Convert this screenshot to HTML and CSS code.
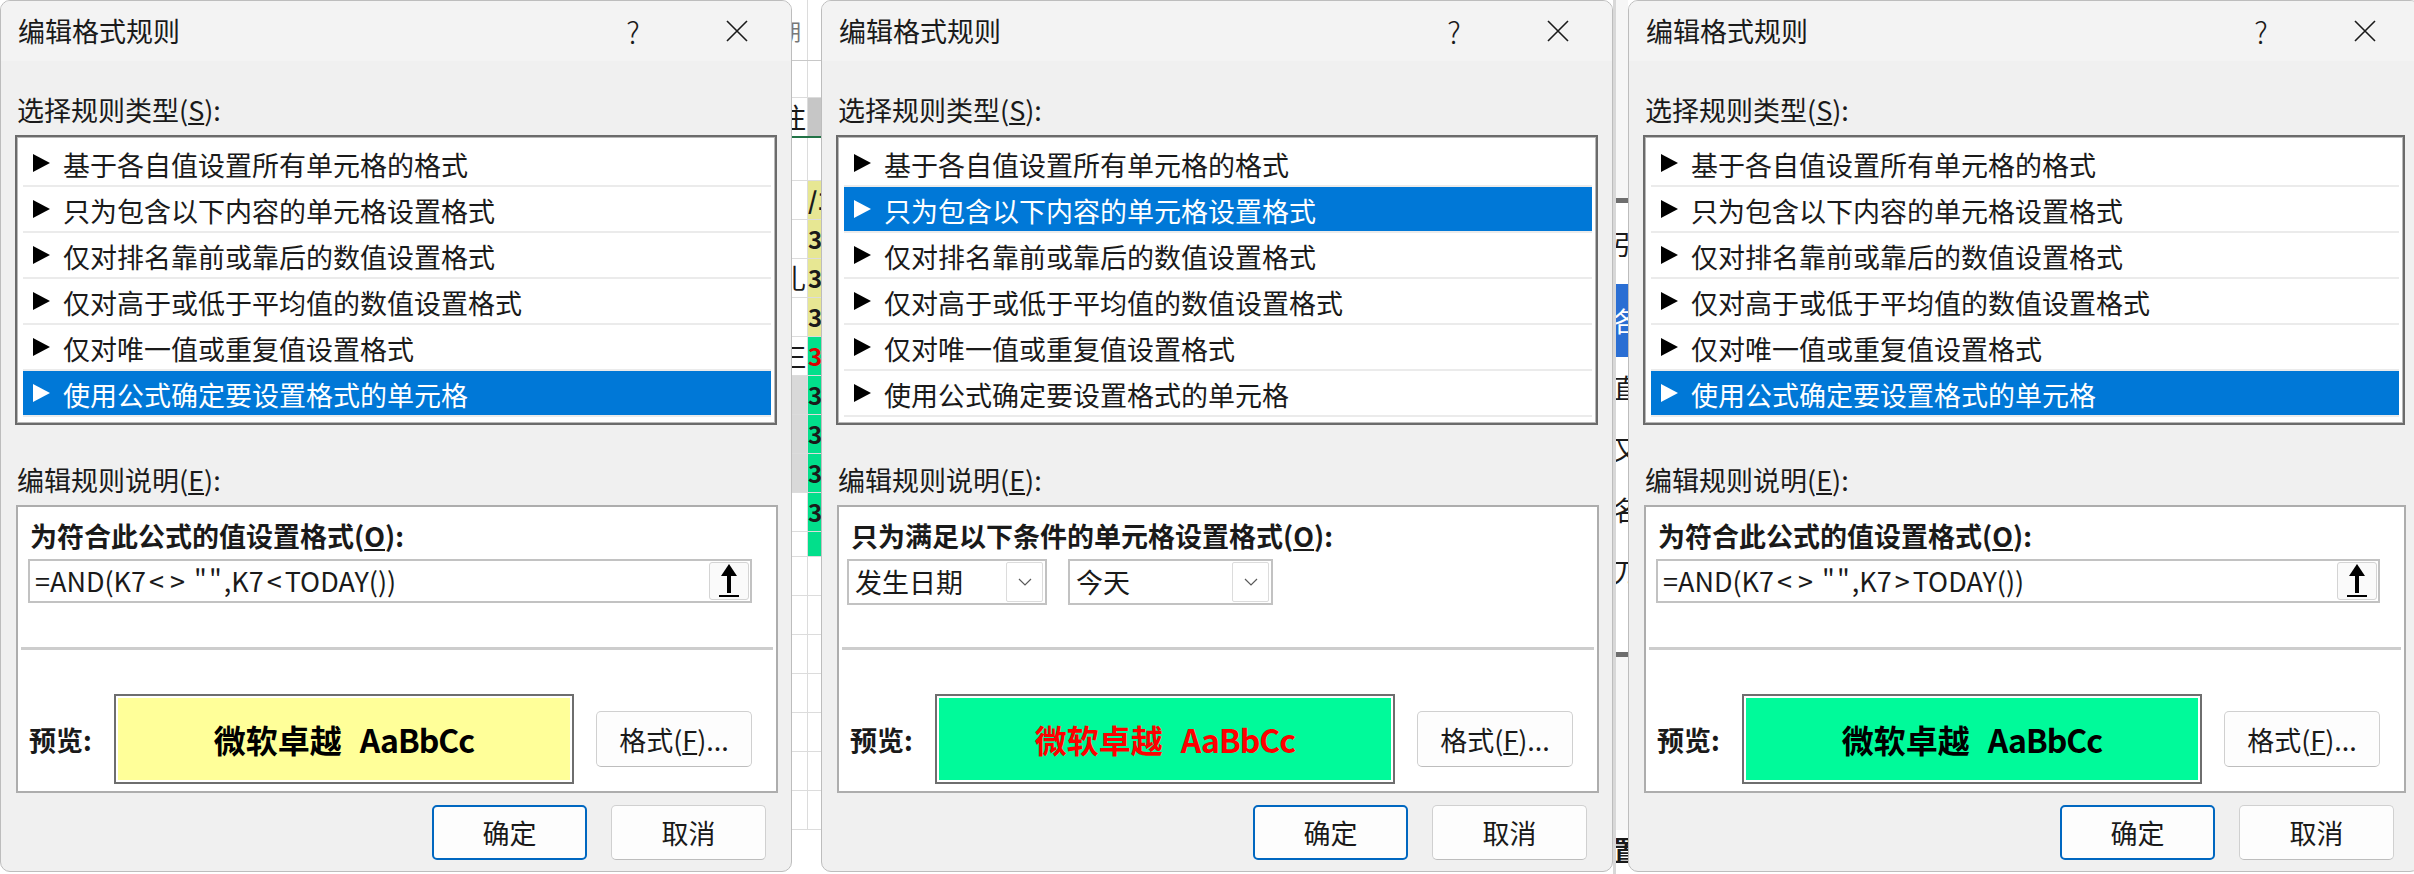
FILE: index.html
```html
<!DOCTYPE html>
<html lang="zh-CN">

<head>
  <meta charset="UTF-8" />
  <title>编辑格式规则</title>
  <link rel="stylesheet" href="styles.css">
</head>

<body>
  <div class="screen">
    <!-- 第一个对话框：公式 < TODAY() -->
    <div class="dialog">
      <div class="titlebar">
        <span class="title">编辑格式规则</span>
        <span class="cap cap-help">?</span>
        <span class="cap"><svg width="24" height="24" viewBox="0 0 24 24"><path d="M2 2L22 22M22 2L2 22" stroke="#1a1a1a" stroke-width="1.6" fill="none"/></svg></span>
      </div>
      <div class="label">选择规则类型(<u>S</u>):</div>
      <ul class="rules">
        <li><i class="arrow"></i>基于各自值设置所有单元格的格式</li>
        <li><i class="arrow"></i>只为包含以下内容的单元格设置格式</li>
        <li><i class="arrow"></i>仅对排名靠前或靠后的数值设置格式</li>
        <li><i class="arrow"></i>仅对高于或低于平均值的数值设置格式</li>
        <li><i class="arrow"></i>仅对唯一值或重复值设置格式</li>
        <li class="on"><i class="arrow"></i>使用公式确定要设置格式的单元格</li>
      </ul>
      <div class="label label-edit">编辑规则说明(<u>E</u>):</div>
      <div class="desc">
        <div class="desc-title">为符合此公式的值设置格式(<u>O</u>):</div>
        <div class="formula">
          <span class="formula-text">=AND(K7<i class="op">&lt;</i><i class="op">&gt;</i><i class="q">""</i>,K7<i class="op">&lt;</i>TODAY())</span>
          <span class="ref-btn"><svg width="24" height="36" viewBox="0 0 24 36"><path d="M12 1L4 13H20Z" fill="#000"/><rect x="10" y="11" width="4" height="19" fill="#000"/><rect x="2" y="32" width="20" height="2" fill="#000"/></svg></span>
        </div>
        <div class="sep"></div>
        <div class="preview-row">
          <span class="preview-label">预览:</span>
          <div class="preview preview-yellow"><b>微软卓越</b><b class="latin">AaBbCc</b></div>
          <button class="btn btn-format">格式(<u>F</u>)...</button>
        </div>
      </div>
      <div class="actions">
        <button class="btn btn-ok">确定</button>
        <button class="btn">取消</button>
      </div>
    </div>

    <!-- 对话框后面露出的表格 -->
    <div class="sheet sheet-a">
      <div class="row r-top"><span class="cell"><i class="glyph gray">期</i></span><span class="cell"></span></div>
      <div class="row" style="height:37px"><span class="cell"></span><span class="cell"></span></div>
      <div class="row r-head"><span class="cell"><i class="glyph">注</i></span><span class="cell c-gray"></span></div>
      <div class="row" style="height:43px"><span class="cell"></span><span class="cell"></span></div>
      <div class="row"><span class="cell"></span><span class="cell c-yellow"><i class="num">/1</i></span></div>
      <div class="row"><span class="cell"></span><span class="cell c-yellow"><i class="num">3/</i></span></div>
      <div class="row"><span class="cell"><i class="glyph">扎</i></span><span class="cell c-yellow"><i class="num">3/</i></span></div>
      <div class="row"><span class="cell"></span><span class="cell c-yellow"><i class="num">3/</i></span></div>
      <div class="row"><span class="cell"><i class="glyph">仨</i></span><span class="cell c-green"><i class="num red">3/</i></span></div>
      <div class="row"><span class="cell c-gray2"></span><span class="cell c-green"><i class="num">3/</i></span></div>
      <div class="row"><span class="cell c-gray2"></span><span class="cell c-green"><i class="num">3/</i></span></div>
      <div class="row"><span class="cell c-gray2"></span><span class="cell c-green"><i class="num">3/</i></span></div>
      <div class="row"><span class="cell"></span><span class="cell c-green"><i class="num">3/</i></span></div>
      <div class="row" style="height:25px"><span class="cell"></span><span class="cell c-green"></span></div>
      <div class="row"><span class="cell"></span><span class="cell"></span></div>
      <div class="row"><span class="cell"></span><span class="cell"></span></div>
      <div class="row"><span class="cell"></span><span class="cell"></span></div>
      <div class="row"><span class="cell"></span><span class="cell"></span></div>
      <div class="row"><span class="cell"></span><span class="cell"></span></div>
      <div class="row"><span class="cell"></span><span class="cell"></span></div>
      <div class="row"><span class="cell"></span><span class="cell"></span></div>
    </div>

    <!-- 第二个对话框：发生日期 今天 -->
    <div class="dialog">
      <div class="titlebar">
        <span class="title">编辑格式规则</span>
        <span class="cap cap-help">?</span>
        <span class="cap"><svg width="24" height="24" viewBox="0 0 24 24"><path d="M2 2L22 22M22 2L2 22" stroke="#1a1a1a" stroke-width="1.6" fill="none"/></svg></span>
      </div>
      <div class="label">选择规则类型(<u>S</u>):</div>
      <ul class="rules">
        <li><i class="arrow"></i>基于各自值设置所有单元格的格式</li>
        <li class="on"><i class="arrow"></i>只为包含以下内容的单元格设置格式</li>
        <li><i class="arrow"></i>仅对排名靠前或靠后的数值设置格式</li>
        <li><i class="arrow"></i>仅对高于或低于平均值的数值设置格式</li>
        <li><i class="arrow"></i>仅对唯一值或重复值设置格式</li>
        <li><i class="arrow"></i>使用公式确定要设置格式的单元格</li>
      </ul>
      <div class="label label-edit">编辑规则说明(<u>E</u>):</div>
      <div class="desc">
        <div class="desc-title">只为满足以下条件的单元格设置格式(<u>O</u>):</div>
        <div class="combos">
          <div class="combo combo-date">
            <span class="combo-text">发生日期</span>
            <span class="combo-btn"><svg width="14" height="8" viewBox="0 0 14 8"><path d="M1 1L7 7L13 1" stroke="#5a5a5a" stroke-width="1.2" fill="none"/></svg></span>
          </div>
          <div class="combo combo-day">
            <span class="combo-text">今天</span>
            <span class="combo-btn"><svg width="14" height="8" viewBox="0 0 14 8"><path d="M1 1L7 7L13 1" stroke="#5a5a5a" stroke-width="1.2" fill="none"/></svg></span>
          </div>
        </div>
        <div class="sep sep-combo"></div>
        <div class="preview-row">
          <span class="preview-label">预览:</span>
          <div class="preview preview-green preview-red"><b>微软卓越</b><b class="latin">AaBbCc</b></div>
          <button class="btn btn-format">格式(<u>F</u>)...</button>
        </div>
      </div>
      <div class="actions">
        <button class="btn btn-ok">确定</button>
        <button class="btn">取消</button>
      </div>
    </div>

    <div class="sheet sheet-b">
      <div class="blk" style="height:198px;background:#f6f6f6"></div>
      <div class="blk bar"></div>
      <div class="blk" style="height:81px"><i class="glyph">引</i></div>
      <div class="blk blue" style="height:73px"><i class="glyph">各</i></div>
      <div class="blk" style="height:61px"><i class="glyph">直</i></div>
      <div class="blk" style="height:61px"><i class="glyph">又</i></div>
      <div class="blk" style="height:61px"><i class="glyph">名</i></div>
      <div class="blk" style="height:61px"><i class="glyph">刀</i></div>
      <div class="blk" style="height:51px"></div>
      <div class="blk bar"></div>
      <div class="blk" style="height:173px;background:#f6f6f6"></div>
      <div class="blk" style="height:40px"><i class="glyph bold">置</i></div>
    </div>

    <!-- 第三个对话框：公式 > TODAY() -->
    <div class="dialog">
      <div class="titlebar">
        <span class="title">编辑格式规则</span>
        <span class="cap cap-help">?</span>
        <span class="cap"><svg width="24" height="24" viewBox="0 0 24 24"><path d="M2 2L22 22M22 2L2 22" stroke="#1a1a1a" stroke-width="1.6" fill="none"/></svg></span>
      </div>
      <div class="label">选择规则类型(<u>S</u>):</div>
      <ul class="rules">
        <li><i class="arrow"></i>基于各自值设置所有单元格的格式</li>
        <li><i class="arrow"></i>只为包含以下内容的单元格设置格式</li>
        <li><i class="arrow"></i>仅对排名靠前或靠后的数值设置格式</li>
        <li><i class="arrow"></i>仅对高于或低于平均值的数值设置格式</li>
        <li><i class="arrow"></i>仅对唯一值或重复值设置格式</li>
        <li class="on"><i class="arrow"></i>使用公式确定要设置格式的单元格</li>
      </ul>
      <div class="label label-edit">编辑规则说明(<u>E</u>):</div>
      <div class="desc">
        <div class="desc-title">为符合此公式的值设置格式(<u>O</u>):</div>
        <div class="formula">
          <span class="formula-text">=AND(K7<i class="op">&lt;</i><i class="op">&gt;</i><i class="q">""</i>,K7<i class="op">&gt;</i>TODAY())</span>
          <span class="ref-btn"><svg width="24" height="36" viewBox="0 0 24 36"><path d="M12 1L4 13H20Z" fill="#000"/><rect x="10" y="11" width="4" height="19" fill="#000"/><rect x="2" y="32" width="20" height="2" fill="#000"/></svg></span>
        </div>
        <div class="sep"></div>
        <div class="preview-row">
          <span class="preview-label">预览:</span>
          <div class="preview preview-green"><b>微软卓越</b><b class="latin">AaBbCc</b></div>
          <button class="btn btn-format">格式(<u>F</u>)...</button>
        </div>
      </div>
      <div class="actions">
        <button class="btn btn-ok">确定</button>
        <button class="btn">取消</button>
      </div>
    </div>
  </div>
</body>

</html>
```

FILE: styles.css
```css
* {
  margin: 0;
  padding: 0;
  box-sizing: border-box;
}

body {
  width: 2414px;
  height: 874px;
  overflow: hidden;
  background: #fff;
  color: #1a1a1a;
  font-family: "Noto Sans CJK SC", "Noto Sans", sans-serif;
  font-size: 27px;
}

.screen {
  display: flex;
  height: 874px;
}

/* 对话框 */
.dialog {
  flex: none;
  width: 792px;
  height: 872px;
  background: #f0f0f0;
  border: 1px solid #bdbdbd;
  border-radius: 10px;
  display: flex;
  flex-direction: column;
  overflow: hidden;
}

.titlebar {
  height: 60px;
  flex: none;
  display: flex;
  align-items: center;
  padding: 0 2px 0 17px;
  background: #f3f3f3;
}

.title {
  flex: 1;
  line-height: 36px;
}

.cap {
  width: 104px;
  height: 60px;
  display: flex;
  align-items: center;
  justify-content: center;
}

.cap-help {
  font-size: 30px;
  font-weight: 300;
}

.label {
  margin: 31px 0 0 16px;
  line-height: 36px;
}

.label-edit {
  margin-top: 37px;
}

/* 规则类型列表 */
.rules {
  list-style: none;
  flex: none;
  margin: 7px 0 0 14px;
  width: 762px;
  height: 290px;
  background: #fff;
  border: 2px solid #6b6b6b;
  box-shadow: inset 0 0 0 1px #b8b8b8;
  padding: 4px 4px 6px 6px;
}

.rules li {
  height: 46px;
  border-bottom: 2px solid #ebebeb;
  display: flex;
  align-items: center;
  padding: 3px 0 0 10px;
  line-height: 36px;
}

.rules .arrow {
  width: 0;
  height: 0;
  border-left: 17px solid #000;
  border-top: 9.5px solid transparent;
  border-bottom: 9.5px solid transparent;
  margin: -3px 13px 0 0;
}

.rules li.on {
  background: #0078d7;
  color: #fff;
}

.rules li.on .arrow {
  border-left-color: #fff;
}

/* 规则说明 */
.desc {
  flex: none;
  margin: 7px 0 0 15px;
  width: 762px;
  height: 288px;
  background: #fff;
  border: 2px solid #adadad;
}

.desc-title {
  font-weight: 700;
  line-height: 36px;
  margin: 11px 0 0 12px;
}

.formula {
  margin: 5px 0 0 10px;
  width: 724px;
  height: 44px;
  border: 2px solid #c2c2c2;
  display: flex;
  align-items: center;
  padding: 0 1px 0 5px;
}

.formula-text {
  flex: 1;
  line-height: 36px;
}

.formula-text i {
  font-style: normal;
}

.formula-text .op {
  margin: 0 3px;
}

.formula-text .q {
  margin: 0 0 0 6px;
  letter-spacing: 2px;
}

.ref-btn {
  width: 40px;
  height: 38px;
  border: 1px solid #d4d4d4;
  border-radius: 3px;
  background: #fafafa;
  display: flex;
  align-items: center;
  justify-content: center;
}

.combos {
  display: flex;
  gap: 21px;
  margin: 5px 0 0 8px;
}

.combo {
  height: 46px;
  border: 2px solid #c2c2c2;
  display: flex;
  align-items: center;
  padding: 0 2px 0 6px;
}

.combo-date {
  width: 200px;
}

.combo-day {
  width: 205px;
}

.combo-text {
  flex: 1;
  line-height: 36px;
}

.combo-btn {
  width: 37px;
  height: 40px;
  border: 1px solid #dcdcdc;
  border-radius: 2px;
  display: flex;
  align-items: center;
  justify-content: center;
}

.sep {
  height: 3px;
  background: #cdcdcd;
  margin: 44px 3px 0 3px;
}

.sep-combo {
  margin-top: 42px;
}

.preview-row {
  display: flex;
  align-items: center;
  margin-top: 44px;
}

.preview-label {
  width: 85px;
  margin-left: 11px;
  font-weight: 700;
}

.preview {
  width: 460px;
  height: 90px;
  border: 2px solid #6e6e6e;
  box-shadow: inset 0 0 0 2px #fff;
  display: flex;
  align-items: center;
  justify-content: center;
  font-size: 32px;
  color: #000;
}

.preview .latin {
  margin-left: 18px;
  letter-spacing: -1px;
}

.preview-yellow {
  background: #ffff99;
}

.preview-green {
  background: #00fa9a;
}

.preview-red {
  color: #ff0000;
}

/* 按钮 */
.btn {
  font: inherit;
  color: inherit;
  background: #fdfdfd;
  border: 1px solid #d0d0d0;
  border-bottom-color: #bdbdbd;
  border-radius: 5px;
}

.btn-format {
  width: 156px;
  height: 56px;
  margin-left: 22px;
}

.actions {
  display: flex;
  justify-content: flex-end;
  gap: 24px;
  padding-right: 25px;
  margin-top: 12px;
}

.actions .btn {
  width: 155px;
  height: 55px;
}

.actions .btn-ok {
  border: 2px solid #0067c0;
}

/* 后面露出的表格 */
.sheet {
  flex: none;
  height: 874px;
  overflow: hidden;
  background: #fff;
  display: flex;
  flex-direction: column;
}

.sheet-a {
  width: 29px;
}

.sheet-b {
  width: 15px;
  border-left: 3px solid #d8d8d8;
}

.row {
  flex: none;
  height: 39px;
  display: flex;
  border-bottom: 1px solid #dcdcdc;
}

.r-top {
  height: 61px;
  border-bottom-color: #c8c8c8;
}

.r-head {
  height: 40px;
  border-bottom: 2px solid #217346;
}

.cell {
  width: 15px;
  flex: none;
  overflow: hidden;
  display: flex;
  align-items: center;
}

.cell + .cell {
  width: 14px;
  border-left: 1px solid #dcdcdc;
}

.c-gray {
  background: #c6c6c6;
}

.c-gray2 {
  background: #d9d9d9;
}

.c-yellow {
  background: #e7e793;
}

.c-green {
  background: #02df8b;
}

.glyph {
  font-style: normal;
  font-size: 27px;
  line-height: 36px;
  margin-left: -13px;
  white-space: nowrap;
}

.sheet-b .glyph {
  margin-left: -3px;
}

.glyph.gray {
  color: #777;
  font-size: 22px;
}

.glyph.bold {
  font-weight: 700;
}

.num {
  font-style: normal;
  font-size: 24px;
  font-weight: 700;
  line-height: 30px;
  white-space: nowrap;
}

.num.red {
  color: #e00000;
}

.blk {
  flex: none;
  overflow: hidden;
  display: flex;
  align-items: center;
}

.blk.bar {
  height: 5px;
  background: #6e6e6e;
}

.blk.blue {
  background: #2a6ed3;
  color: #fff;
}
```
